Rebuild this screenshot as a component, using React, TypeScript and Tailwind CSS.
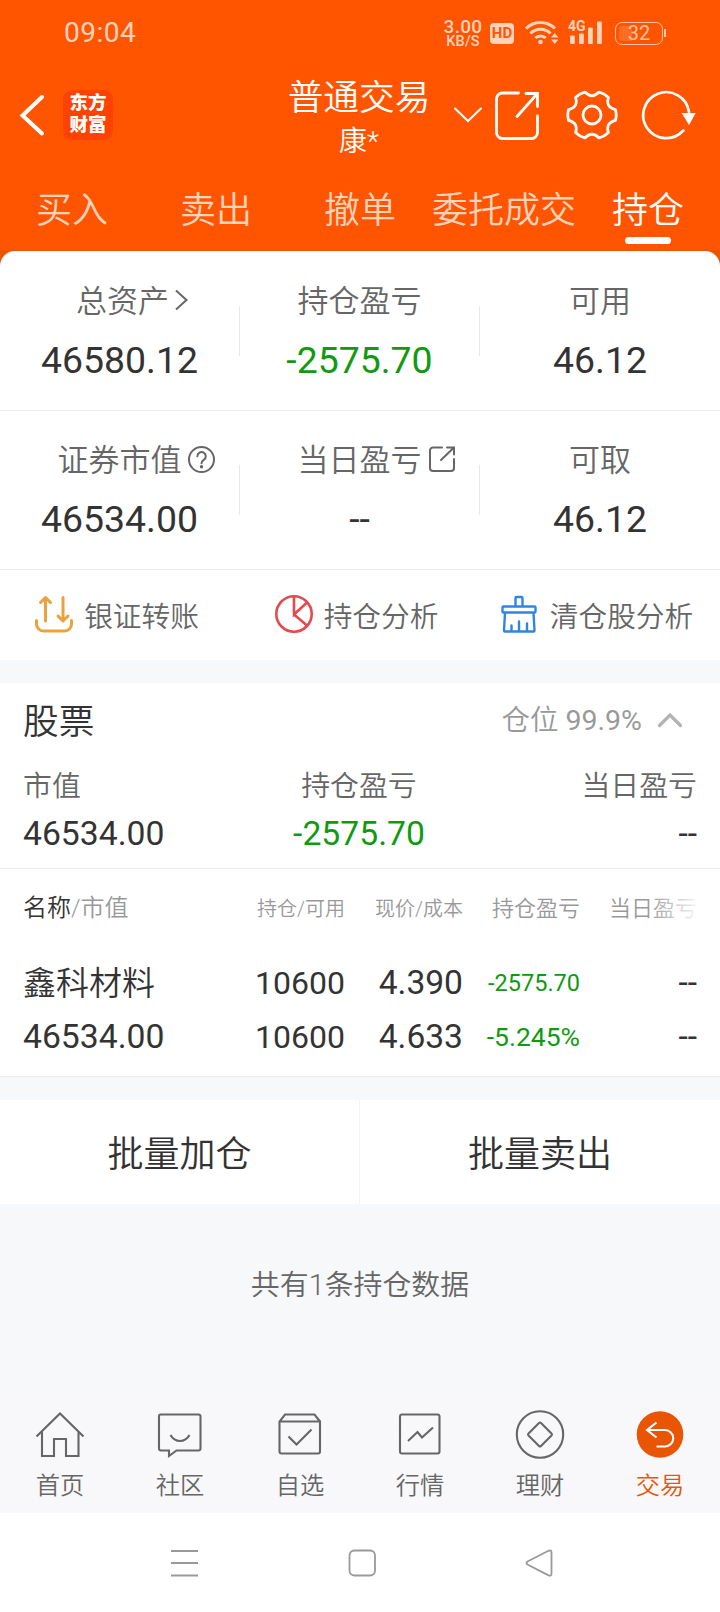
import { ReactNode } from "react"

const FONT = "font-[Roboto,'Noto_Sans_CJK_SC',sans-serif]"

const StatusBar = () => (
    <div className="flex h-[66px] items-center text-[#ffd3bc]">
        <span className="ml-[64px] w-[378px] text-[28px] leading-none tracking-[0.5px]">09:04</span>
        <div className="flex w-[42px] flex-col items-center font-medium">
            <span className="text-[19px] leading-[16px] tracking-[0.3px]">3.00</span>
            <span className="text-[14.5px] leading-[13px] tracking-[0.2px]">KB/S</span>
        </div>
        <span className="ml-[6px] flex h-[21px] w-[24px] items-center justify-center rounded-[4px] bg-[#ffd3bc] text-[15px] leading-none font-bold text-[#ff5500]">HD</span>
        <svg className="ml-[10px] h-[28px] w-[36px]" viewBox="0 0 36 28" fill="none" stroke="currentColor" strokeWidth="3">
            <path d="M2 9.5a20.5 20.5 0 0 1 29 0M6.5 14.5a14 14 0 0 1 20 0M11.3 19a7.5 7.5 0 0 1 10.4 0" />
            <circle cx="16.5" cy="23" r="2.3" fill="currentColor" stroke="none" />
            <path d="M27 18.5l3.7-4.5 3.7 4.5zM27 20.5l3.7 4.5 3.7-4.5z" fill="currentColor" stroke="none" />
        </svg>
        <div className="relative ml-[9px] h-[24px] w-[34px]">
            <span className="absolute -top-[2px] -left-px text-[14px] leading-none font-bold">4G</span>
            <svg className="h-[24px] w-[34px]" viewBox="0 0 34 24" fill="currentColor">
                <rect x="1" y="14.5" width="4.8" height="8.5" rx="1" />
                <rect x="10" y="12.5" width="4.8" height="10.5" rx="1" />
                <rect x="19" y="6.5" width="4.8" height="16.5" rx="1" />
                <rect x="28" y="0.5" width="4.8" height="22.5" rx="1" />
            </svg>
        </div>
        <div className="ml-[12px] flex items-center">
            <div className="flex h-[23px] w-[48px] items-center justify-center rounded-[7px] border-[1.5px] border-[#ffc3a3] bg-linear-to-r from-[#ff6c24] from-32% to-[#ff5500] to-32% bg-clip-content bg-origin-content p-[3px] text-[20px] leading-none text-[#ffc3a3]">32</div>
            <span className="ml-px h-[8px] w-[1.5px] bg-[#ffc3a3]" />
        </div>
    </div>
)

const NavBar = () => (
    <div className="grid h-[96px] grid-cols-[280px_160px_280px] items-center text-white">
        <div className="flex items-center">
            <svg className="ml-[18px] h-[44px] w-[28px]" viewBox="0 0 28 44" fill="none" stroke="currentColor" strokeWidth="4" strokeLinecap="round">
                <path d="M24 4L4.5 22.500l19.500 18" />
            </svg>
            <div className="ml-[17px] flex size-[50px] flex-col items-center justify-center rounded-[9px] bg-[#ff4200] text-[18.500px] leading-[21.500px] font-black">
                <span>东方</span>
                <span>财富</span>
            </div>
        </div>
        <div className="flex flex-col items-center pt-[11px] pr-[2px]">
            <span className="text-[35.7px] leading-[43px] font-[350]">普通交易</span>
            <span className="text-[28px] leading-[43px] font-[350]">康*</span>
        </div>
        <div className="flex items-center">
            <svg className="ml-[13px] h-[16px] w-[30px]" viewBox="0 0 30 16" fill="none" stroke="currentColor" strokeWidth="2" strokeLinecap="round">
                <path d="M2 1.500l13 12.500 13-12.500" />
            </svg>
            <svg className="ml-[11px] h-[50px] w-[46px]" viewBox="0 0 46 50" fill="none" stroke="currentColor" strokeWidth="2.800" strokeLinecap="round">
                <path d="M24.500 3H8.500a6 6 0 0 0-6 6v33.500a6 6 0 0 0 6 6h29a6 6 0 0 0 6-6V26M32 3.500h11.500V16.500M43 4L23 26.500" />
            </svg>
            <svg className="ml-[26px] size-[52px]" viewBox="-26 -26 52 52" fill="none" stroke="currentColor" strokeWidth="2.800" strokeLinejoin="round">
                <path d="M23.400-5.400Q25 0 23.400 5.400 13.400 7.750 16.400 17.600 12.500 21.600 7 22.950 0 15.500-7 22.950-12.500 21.600-16.400 17.600-13.400 7.750-23.400 5.400-25 0-23.400-5.400-13.400-7.750-16.400-17.600-12.500-21.600-7-22.950 0-15.500 7-22.950 12.500-21.600 16.400-17.600 13.400-7.750 23.400-5.400z" />
                <circle r="9" />
            </svg>
            <svg className="ml-[23px] h-[50px] w-[56px]" viewBox="0 0 56 50" fill="none" stroke="currentColor" strokeWidth="2.700" strokeLinecap="round">
                <path d="M42.300 40.500A23 23 0 1 1 48 22" />
                <path d="M40.700 23h14L48 35z" fill="currentColor" stroke="none" />
            </svg>
        </div>
    </div>
)

const TABS = ["买入", "卖出", "撤单", "委托成交", "持仓"]

const TradeTabs = ({ active }: { active: string }) => (
    <div className="grid h-[88px] grid-cols-5">
        {TABS.map(tab => (
            <div key={tab} className={tab === active ? "flex flex-col items-center text-white" : "flex flex-col items-center text-[#ffd3bc]"}>
                <span className="mt-[24px] text-[36px] leading-[51px] font-[350] whitespace-nowrap">{tab}</span>
                {tab === active && <span className="h-[7px] w-[46px] rounded-full bg-white" />}
            </div>
        ))}
    </div>
)

const ShareIcon = () => (
    <svg className="mb-[4px] -mr-[33px] ml-[7px] size-[26px] text-[#666]" viewBox="0 0 26 26" fill="none" stroke="currentColor" strokeWidth="2" strokeLinecap="round">
        <path d="M13 1.500H4a3 3 0 0 0-3 3V22a3 3 0 0 0 3 3h18a3 3 0 0 0 3-3v-9M18 1.500h7v7M24.500 2L12 14" />
    </svg>
)

const HelpIcon = () => (
    <svg className="mb-[3px] -mr-[33px] ml-[6px] size-[27px] text-[#666]" viewBox="0 0 27 27" fill="none" stroke="currentColor" strokeWidth="2" strokeLinecap="round">
        <circle cx="13.500" cy="13.500" r="12.500" />
        <path d="M9.400 10.300a4.200 4.200 0 1 1 6.400 3.600c-1.500 1-2.300 1.500-2.300 3.300" />
        <circle cx="13.500" cy="20.800" r="0.700" fill="currentColor" />
    </svg>
)

const ArrowIcon = () => (
    <svg className="mb-[4px] -mr-[19px] ml-[6px] h-[22px] w-[13px] text-[#666]" viewBox="0 0 13 22" fill="none" stroke="currentColor" strokeWidth="2">
        <path d="M1 1.500L11.500 11 1 20.500" />
    </svg>
)

type Stat = { label: string; value: string; icon?: ReactNode; down?: boolean; shift?: boolean }

const STATS: Stat[][] = [
    [
        { label: "总资产", value: "46580.12", icon: <ArrowIcon />, shift: true },
        { label: "持仓盈亏", value: "-2575.70", down: true },
        { label: "可用", value: "46.12" },
    ],
    [
        { label: "证券市值", value: "46534.00", icon: <HelpIcon /> },
        { label: "当日盈亏", value: "--", icon: <ShareIcon /> },
        { label: "可取", value: "46.12" },
    ],
]

const StatRow = ({ items }: { items: Stat[] }) => (
    <div className="grid h-[159px] grid-cols-3 border-b border-[#ececec]">
        {items.map((item, i) => (
            <div key={item.label} className="flex items-center">
                <div className="flex flex-1 flex-col items-center">
                    <div className={item.shift ? "flex items-center pl-[6px]" : "flex items-center"}>
                        <span className="text-[31px] leading-[58px] font-[350] text-[#666]">{item.label}</span>
                        {item.icon}
                    </div>
                    <span className={item.down ? "text-[37.4px] leading-[59px] text-[#109a10]" : "text-[37.4px] leading-[59px] text-[#333]"}>{item.value}</span>
                </div>
                {i < 2 && <span className="h-[50px] w-px bg-[#e8e8e8]" />}
            </div>
        ))}
    </div>
)

const QuickActions = () => (
    <div className="grid h-[90px] grid-cols-3 text-[28.700px] font-[350] text-[#666]">
        <div className="flex items-center justify-center pr-[7px]">
            <svg className="mb-[2px] h-[38px] w-[40px]" viewBox="0 0 40 38" fill="none" stroke="#eba13c" strokeWidth="3" strokeLinecap="round" strokeLinejoin="round">
                <path d="M2.500 25.500v3.500a7 7 0 0 0 7 7h21a7 7 0 0 0 7-7v-3.500M11.500 26V3M6.500 7.500l5-5 5 5M29 2.500v23M24 21l5 5 5-5" />
            </svg>
            <span className="ml-[10px] pt-[5px]">银证转账</span>
        </div>
        <div className="flex items-center justify-center pr-[7px]">
            <svg className="mb-[2px] size-[38px]" viewBox="0 0 38 38" fill="none" stroke="#e24a4e" strokeWidth="2.600">
                <circle cx="19" cy="19" r="17.700" />
                <path d="M19 1.500V19.500L32 7.500M19 19.500l13 11" />
            </svg>
            <span className="ml-[11px] pt-[5px]">持仓分析</span>
        </div>
        <div className="flex items-center justify-center pr-[6px]">
            <svg className="mb-[2px] h-[38px] w-[36px]" viewBox="0 0 36 38" fill="none" stroke="#2f86e0" strokeWidth="2.400" strokeLinejoin="round" strokeLinecap="round">
                <path d="M14.500 11.500V3q0-1 1-1h5q1 0 1 1v8.500M2.500 11.500h31q1 0 1 1v4q0 1-1 1h-31q-1 0-1-1v-4q0-1 1-1zM4 17.500L3 35.500q0 1 1 1h28.500q1 0 1-1L32.500 17.500M10.500 36v-5.500M18 36V26.500M26 36v-7.500" />
            </svg>
            <span className="ml-[13px] pt-[5px]">清仓股分析</span>
        </div>
    </div>
)

const StockSummary = () => (
    <div className="h-[186px] border-b border-[#ececec] bg-white pt-[10px] pr-[23px] pl-[23px]">
        <div className="flex h-[56px] items-center">
            <span className="pt-[4px] text-[35.700px] leading-none font-[350] text-[#333]">股票</span>
            <span className="ml-auto text-[28.500px] leading-none font-[350] text-[#999]">仓位 <span className="font-normal">99.9%</span></span>
            <svg className="mr-[14px] mb-[3px] ml-[15px] h-[16px] w-[26px]" viewBox="0 0 26 16" fill="none" stroke="#b3b3b3" strokeWidth="3.200" strokeLinecap="round">
                <path d="M2.500 13.500L13 3l10.500 10.500" />
            </svg>
        </div>
        <div className="grid grid-cols-3 text-[28.900px] leading-[49px] font-[350] text-[#666]">
            <span className="mt-[13px]">市值</span>
            <span className="mt-[13px] pr-[2px] text-center">持仓盈亏</span>
            <span className="mt-[13px] text-right">当日盈亏</span>
        </div>
        <div className="grid grid-cols-3 text-[33.700px] leading-[45px] text-[#333]">
            <span>46534.00</span>
            <span className="pr-[2px] text-center text-[#109a10]">-2575.70</span>
            <span className="text-right">--</span>
        </div>
    </div>
)

const COLS = "grid grid-cols-[206px_116px_118px_117px_1fr] items-center pl-[23px] pr-[23px] text-right"

const HoldingsTable = () => (
    <div className="h-[208px] border-b border-[#ececec] bg-white">
        <div className={`${COLS} h-[77px] text-[20px] leading-none font-[350] text-[#999]`}>
            <span className="text-left text-[24px]"><span className="text-[#333]">名称</span>/市值</span>
            <span className="pt-[3px]">持仓/可用</span>
            <span className="pt-[3px]">现价/成本</span>
            <span className="pt-[2px] text-[22px]">持仓盈亏</span>
            <span className="relative pt-[2px] text-[22px]">
                当日盈亏
                <span className="absolute inset-y-0 right-0 w-[50px] bg-linear-to-r from-white/0 to-white/90" />
            </span>
        </div>
        <div className={`${COLS} mt-[10px] h-[54px] leading-none text-[#333]`}>
            <span className="pt-px text-left text-[33px] font-[350]">鑫科材料</span>
            <span className="text-[32px]">10600</span>
            <span className="text-[33.600px]">4.390</span>
            <span className="pt-px text-[23.500px] text-[#109a10]">-2575.70</span>
            <span className="text-[33.600px]">--</span>
        </div>
        <div className={`${COLS} h-[54px] leading-none text-[#333]`}>
            <span className="text-left text-[33.700px]">46534.00</span>
            <span className="text-[32px]">10600</span>
            <span className="text-[33.600px]">4.633</span>
            <span className="text-[26.500px] text-[#109a10]">-5.245%</span>
            <span className="text-[33.600px]">--</span>
        </div>
    </div>
)

const BatchActions = () => (
    <div className="mt-[23px] flex h-[104px] items-center bg-white text-[36px] leading-none font-[350] text-[#333]">
        <span className="w-[359px] pt-[5px] text-center">批量加仓</span>
        <span className="h-full w-px bg-[#f4f4f5]" />
        <span className="flex-1 pt-[5px] text-center">批量卖出</span>
    </div>
)

const NAV: { label: string; icon: ReactNode }[] = [
    { label: "首页", icon: <path d="M1.500 26.500L25 3.500l23.500 23M7 21.500V46h12V29h12v17h12.500V21.500" /> },
    { label: "社区", icon: <path d="M5.500 4.500h38q2 0 2 2v32q0 2-2 2H21.500l-7.500 5.500v-5.500H6q-2 0-2-2v-32q0-2 1.500-2zM15.500 25c4.500 8 14.500 8 19 0" /> },
    { label: "自选", icon: <path d="M4.500 11.500h40.500v30q0 2-2 2h-36.500q-2 0-2-2v-30L10 4.500h29.500l5.500 7M13.500 26.500l8 8L36.500 19.500" /> },
    { label: "行情", icon: <path d="M7 4.500h35.500q2 0 2 2v35q0 2-2 2H7q-2 0-2-2v-35q0-2 2-2zM13 31l9.500-9 4.500 5.500L38 17.500" /> },
    { label: "理财", icon: <><circle cx="25" cy="24.500" r="23.200" /><path d="M24 13q1-1 2 0l10.500 10.500q1 1 0 2L26 36q-1 1-2 0L13.500 25.500q-1-1 0-2z" /></> },
    { label: "交易", icon: <><circle cx="25" cy="24.500" r="23.300" fill="#ea5504" stroke="none" /><path d="M21.500 12.500L12 20l9.500 7.500M12.500 20H30a8 8 0 0 1 0 16.500h-8.500" stroke="#fff" /></> },
]

const BottomNav = () => (
    <div className="grid h-[120px] grid-cols-6 bg-[#f8f8fa] pt-[17px]">
        {NAV.map(item => (
            <div key={item.label} className={item.label === "交易" ? "flex flex-col items-center text-[#ea5504]" : "flex flex-col items-center text-[#666]"}>
                <svg className="size-[50px]" viewBox="0 0 50 50" fill="none" stroke="currentColor" strokeWidth="2.100">{item.icon}</svg>
                <span className="mt-[12px] text-[24.300px] leading-[28px] font-[350]">{item.label}</span>
            </div>
        ))}
    </div>
)

const SystemNav = () => (
    <div className="flex h-[99px] items-center bg-white">
        <svg className="ml-[170px] size-[28px]" viewBox="0 0 28 28" stroke="#999" strokeWidth="2">
            <path d="M1 2h27M1 14h27M1 26.500h27" />
        </svg>
        <svg className="ml-[150px] size-[28px]" viewBox="0 0 28 28" fill="none" stroke="#999" strokeWidth="1.800">
            <rect x="1.500" y="1.500" width="25.500" height="25" rx="5" />
        </svg>
        <svg className="ml-[149px] size-[28px]" viewBox="0 0 28 28" fill="none" stroke="#999" strokeWidth="1.800">
            <path d="M2.500 12.500L23.500 1.800q3-1 3 1.500v21.500q0 2.500-3 1.500L2.500 15.500q-2-1.500 0-3z" />
        </svg>
    </div>
)

const App = () => {
    return (
        <div className={`flex h-[1612px] w-[720px] flex-col overflow-hidden bg-[#f7f8fa] ${FONT}`}>
            <div className="bg-[#ff5500]">
                <StatusBar />
                <NavBar />
                <TradeTabs active="持仓" />
            </div>
            <div className="bg-[#ea5504] pt-px">
                <div className="rounded-t-[15px] bg-white pt-px">
                    <StatRow items={STATS[0]} />
                    <StatRow items={STATS[1]} />
                    <QuickActions />
                </div>
            </div>
            <div className="mt-[23px]">
                <StockSummary />
                <HoldingsTable />
            </div>
            <BatchActions />
            <div className="flex-1 pt-[58px] text-center text-[28.900px] leading-[46px] font-[350] text-[#666]">共有1条持仓数据</div>
            <BottomNav />
            <SystemNav />
        </div>
    )
}
export default App
